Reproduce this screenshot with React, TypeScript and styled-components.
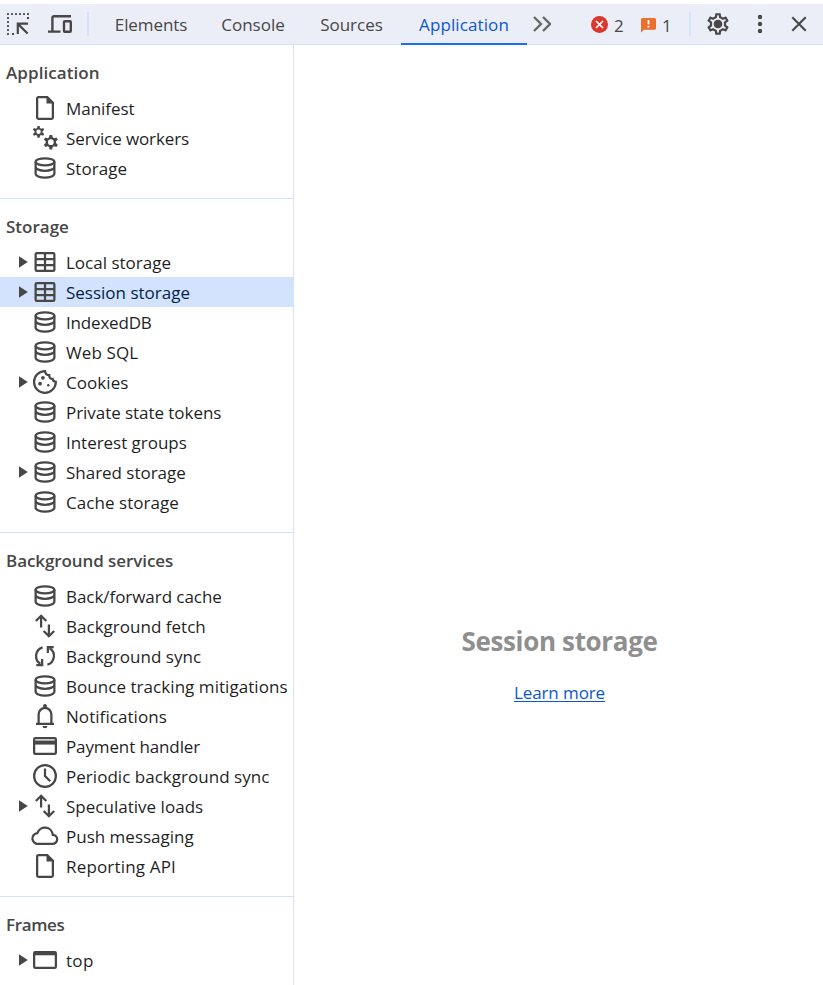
import styled, { createGlobalStyle } from "styled-components";
import { MdOutlineSettings } from "react-icons/md";
import type { ReactNode } from "react";


const GlobalStyle = createGlobalStyle`
    * {
        box-sizing:border-box;
    }
    body {
        margin:0;
        background-color:#fff;
        font-family:"Segoe UI", "Open Sans", "Noto Sans", sans-serif;
        font-size:17px;
        color:#1f1f1f;
    }
    svg {
        display:block;
        flex-shrink:0;
    }
`;
const Container = styled.div`
    width:100%;
    height:985px;
    padding-top:4px;
    display:flex;
    flex-direction:column;
    overflow:hidden;
`;
const Toolbar = styled.div`
    height:41px;
    display:flex;
    align-items:center;
    flex-shrink:0;
    background-color:#ebeef6;
    border-bottom:1px solid #d3e3fd;
    color:#474747;
`;
const IconButton = styled.div<{ $width: number }>`
    width:${(props) => props.$width}px;
    display:flex;
    justify-content:center;
    flex-shrink:0;
`;
const Divider = styled.div`
    width:2px;
    height:24px;
    flex-shrink:0;
    background-color:#d3e3fd;
`;
const Tabs = styled.div`
    display:flex;
    height:41px;
    margin-left:9px;
    align-self:flex-start;
`;
const Tab = styled.div<{ $width: number; $spacing: number; $active?: boolean }>`
    width:${(props) => props.$width}px;
    height:41px;
    line-height:41px;
    text-align:center;
    white-space:nowrap;
    letter-spacing:${(props) => props.$spacing}px;
    color:${(props) => (props.$active ? "#0b57d0" : "#474747")};
    box-shadow:${(props) => (props.$active ? "inset 0 -2px 0 #1a6ef3" : "none")};
`;
const Counters = styled.div`
    display:flex;
    margin-left:34px;
`;
const Counter = styled.div<{ $width: number }>`
    width:${(props) => props.$width}px;
    display:flex;
    align-items:center;
    flex-shrink:0;
    gap:6px;
    span {
        line-height:24px;
        padding-top:3px;
    }
`;
const Body = styled.div`
    flex:1;
    min-height:0;
    display:flex;
`;
const Sidebar = styled.div`
    width:294px;
    flex-shrink:0;
    border-right:1px solid #d3e3fd;
`;
const Section = styled.div`
    padding-bottom:15px;
    border-bottom:1px solid #d3e3fd;
    &:last-child {
        border-bottom:none;
    }
`;
const SectionTitle = styled.h2<{ $spacing: number }>`
    height:48px;
    margin:0;
    padding:8px 0 0 6px;
    line-height:40px;
    font-size:17px;
    font-weight:600;
    letter-spacing:${(props) => props.$spacing}px;
    color:#474747;
`;
const Row = styled.div<{ $selected?: boolean }>`
    height:30px;
    padding-left:18px;
    display:flex;
    align-items:center;
    color:${(props) => (props.$selected ? "#041e49" : "#1f1f1f")};
    background-color:${(props) => (props.$selected ? "#d3e3fd" : "transparent")};
`;
const Arrow = styled.div`
    width:12px;
    flex-shrink:0;
    color:#474747;
`;
const RowIcon = styled.div`
    width:30px;
    margin-right:6px;
    flex-shrink:0;
    color:#474747;
`;
const Label = styled.span<{ $spacing: number }>`
    padding-top:2px;
    line-height:28px;
    white-space:nowrap;
    letter-spacing:${(props) => props.$spacing}px;
`;
const Main = styled.div`
    flex:1;
    padding:576px 0 0 2px;
    display:flex;
    flex-direction:column;
    align-items:center;
    h1 {
        margin:0;
        line-height:40px;
        font-size:26px;
        font-weight:700;
        letter-spacing:-0.35px;
        color:#8f8f8f;
    }
    a {
        margin-top:17px;
        line-height:30px;
        letter-spacing:-0.1px;
        color:#0b57d0;
        text-decoration:underline;
        text-underline-offset:2px;
        text-decoration-thickness:1px;
    }
`;

const Svg = ({ children }: { children: ReactNode }) => (
    <svg width="30" height="30" viewBox="0 0 20 20" fill="none" stroke="currentColor" strokeWidth="1.5">
        {children}
    </svg>
);

// filled six-tooth cog with a round hole, drawn with the evenodd rule
const cogPath = (cx: number, cy: number, outer: number, inner: number, hole: number) => {
    const step = Math.PI / 3;
    const points: string[] = [];
    for (let i = 0; i < 6; i++) {
        const mid = i * step - Math.PI / 2;
        [[-0.34, inner], [-0.17, outer], [0.17, outer], [0.34, inner]].forEach(([offset, r]) => {
            const angle = mid + offset * step;
            points.push(`${(cx + Math.cos(angle) * r).toFixed(2)} ${(cy + Math.sin(angle) * r).toFixed(2)}`);
        });
    }
    return `M${points.join("L")}ZM${cx - hole} ${cy}a${hole} ${hole} 0 1 0 ${hole * 2} 0a${hole} ${hole} 0 1 0 ${-hole * 2} 0Z`;
};

const icons = {
    document: (
        <Svg>
            <path d="M11.5 2.75H5.6a.85.85 0 0 0-.85.85v12.8c0 .47.38.85.85.85h8.8c.47 0 .85-.38.85-.85V6.5z" />
            <path d="M11 2.5V7h4.5z" fill="currentColor" stroke="none" />
        </Svg>
    ),
    gears: (
        <Svg>
            <g fill="currentColor" fillRule="evenodd" stroke="none">
                <path d={cogPath(5.7, 5.9, 4, 2.7, 1.5)} />
                <path d={cogPath(13.9, 12.8, 4.9, 3.5, 1.9)} />
            </g>
        </Svg>
    ),
    database: (
        <Svg>
            <ellipse cx="10" cy="5.9" rx="6.25" ry="2.4" />
            <path d="M3.75 5.9v8c0 1.3 2.8 2.5 6.25 2.5s6.25-1.2 6.25-2.5v-8M3.75 9.2c0 1.4 2.8 2.7 6.25 2.7s6.25-1.3 6.25-2.7" />
        </Svg>
    ),
    table: (
        <Svg>
            <rect x="3.75" y="4.05" width="12.5" height="11.9" rx=".8" />
            <path d="M3.75 8h12.5M3.75 12h12.5M10 4v12" />
        </Svg>
    ),
    cookie: (
        <Svg>
            <path d="M10 2.75a7.25 7.25 0 1 0 7.2 7.1c-1.2-.1-2-.7-2.1-1.9-1.5 0-2.4-1-2.3-2.5-1.5 0-2.6-1.2-2.8-2.7z" />
            <circle cx="8.6" cy="7.2" r="1.25" fill="currentColor" stroke="none" />
            <circle cx="6.7" cy="11.1" r="1.25" fill="currentColor" stroke="none" />
            <circle cx="12.2" cy="12.2" r=".8" fill="currentColor" stroke="none" />
        </Svg>
    ),
    transfer: (
        <Svg>
            <path d="M7.4 11V3.4M3.9 6.7l3.5-3.5 3.5 3.5M12.6 9v7.6M9.1 13.3l3.5 3.5 3.5-3.5" />
        </Svg>
    ),
    sync: (
        <Svg>
            <path d="M8.4 4.2A6.1 6.1 0 0 0 6.9 15.2M4.2 16h3.9v-4" />
            <path d="M11.6 15.8A6.1 6.1 0 0 0 13.1 4.8M15.8 4h-3.9v4" />
        </Svg>
    ),
    bell: (
        <Svg>
            <path d="M4 15.25h12M5.75 15V8.9a4.25 4.25 0 0 1 8.5 0V15" />
            <path d="M8.4 16.6h3.2a1.6 1.6 0 0 1-3.2 0z" fill="currentColor" stroke="none" />
            <circle cx="10" cy="3.3" r="1.3" fill="currentColor" stroke="none" />
        </Svg>
    ),
    card: (
        <Svg>
            <rect x="2.75" y="4.75" width="14.5" height="10.5" rx=".8" />
            <path d="M3 7.7h14" strokeWidth="2.7" />
        </Svg>
    ),
    clock: (
        <Svg>
            <circle cx="10" cy="10" r="7.25" />
            <path d="M10 5v5l3.5 3.5" />
        </Svg>
    ),
    cloud: (
        <Svg>
            <path d="M5.5 15.25a3.6 3.6 0 0 1-.6-7.2 5.3 5.3 0 0 1 10.3 1.2 3 3 0 0 1-.2 6z" />
        </Svg>
    ),
    frame: (
        <Svg>
            <rect x="2.75" y="4.75" width="14.5" height="10.5" rx=".8" />
            <path d="M3 5.6h14" strokeWidth="2.5" />
        </Svg>
    ),
};

type Item = { label: string; icon: keyof typeof icons; spacing: number; expandable?: boolean; selected?: boolean };

const sections: { title: string; spacing: number; items: Item[] }[] = [
    {
        title: "Application",
        spacing: 0.08,
        items: [
            { label: "Manifest", icon: "document", spacing: -0.04 },
            { label: "Service workers", icon: "gears", spacing: -0.1 },
            { label: "Storage", icon: "database", spacing: 0.04 },
        ],
    },
    {
        title: "Storage",
        spacing: 0,
        items: [
            { label: "Local storage", icon: "table", spacing: 0, expandable: true },
            { label: "Session storage", icon: "table", spacing: 0, expandable: true, selected: true },
            { label: "IndexedDB", icon: "database", spacing: -0.18 },
            { label: "Web SQL", icon: "database", spacing: 0.12 },
            { label: "Cookies", icon: "cookie", spacing: 0.05, expandable: true },
            { label: "Private state tokens", icon: "database", spacing: -0.05 },
            { label: "Interest groups", icon: "database", spacing: -0.03 },
            { label: "Shared storage", icon: "database", spacing: -0.02, expandable: true },
            { label: "Cache storage", icon: "database", spacing: 0.05 },
        ],
    },
    {
        title: "Background services",
        spacing: -0.08,
        items: [
            { label: "Back/forward cache", icon: "database", spacing: -0.05 },
            { label: "Background fetch", icon: "transfer", spacing: 0.02 },
            { label: "Background sync", icon: "sync", spacing: 0.02 },
            { label: "Bounce tracking mitigations", icon: "database", spacing: 0.05 },
            { label: "Notifications", icon: "bell", spacing: 0.06 },
            { label: "Payment handler", icon: "card", spacing: -0.12 },
            { label: "Periodic background sync", icon: "clock", spacing: 0.03 },
            { label: "Speculative loads", icon: "transfer", spacing: 0.02, expandable: true },
            { label: "Push messaging", icon: "cloud", spacing: 0 },
            { label: "Reporting API", icon: "document", spacing: 0.17 },
        ],
    },
    {
        title: "Frames",
        spacing: -0.35,
        items: [{ label: "top", icon: "frame", spacing: 0.3, expandable: true }],
    },
];

const topDots = [0, 4, 8, 12, 16, 20];
const leftDots = [4, 8, 12, 16, 20];

const App = () => {

    return (
        <>
            <GlobalStyle />
            <Container>
                <Toolbar>
                    <IconButton $width={36}>
                        <svg width="22" height="22" viewBox="0 0 22 22" fill="currentColor">
                            {topDots.map((x) => <rect key={x} x={x} y="0" width="2" height="2" rx=".4" />)}
                            {leftDots.map((y) => <rect key={y} x="0" y={y} width="2" height="2" rx=".4" />)}
                            <path d="M20 4h2v2h-2zM5 20h2v2H5z" />
                            <path d="M9.7 9.5H21v2.2h-7.6l8 8-1.6 1.6-7.9-7.9V21H9.7z" />
                        </svg>
                    </IconButton>
                    <IconButton $width={48}>
                        <svg width="24" height="18" viewBox="0 0 24 18" fill="none" stroke="currentColor" strokeWidth="2.4">
                            <path d="M23 1.2H6a1.6 1.6 0 0 0-1.6 1.6V16M0 16.6h12.5" />
                            <rect x="16" y="6.2" width="6.8" height="10.6" rx=".8" />
                        </svg>
                    </IconButton>
                    <Divider style={{ marginLeft: 3 }} />
                    <Tabs>
                        <Tab $width={106} $spacing={-0.1}>Elements</Tab>
                        <Tab $width={98} $spacing={0}>Console</Tab>
                        <Tab $width={99} $spacing={0}>Sources</Tab>
                        <Tab $width={126} $spacing={0.1} $active>Application</Tab>
                    </Tabs>
                    <IconButton $width={30}>
                        <svg width="18" height="16" viewBox="0 0 18 16" fill="none" stroke="#666" strokeWidth="2.3">
                            <path d="M1 1l7 7-7 7M10 1l7 7-7 7" />
                        </svg>
                    </IconButton>
                    <Counters>
                        <Counter $width={50}>
                            <svg width="17" height="17" viewBox="0 0 17 17">
                                <circle cx="8.5" cy="8.5" r="8.5" fill="#dc362e" />
                                <path d="M5 5l7 7M12 5l-7 7" stroke="#fff" strokeWidth="1.7" />
                            </svg>
                            <span>2</span>
                        </Counter>
                        <Counter $width={48}>
                            <svg width="15" height="17" viewBox="0 0 15 17">
                                <path d="M1.5 2h12A1.5 1.5 0 0 1 15 3.5v8.7a1.5 1.5 0 0 1-1.5 1.5H3l-3 2.8v-13A1.5 1.5 0 0 1 1.5 2z" fill="#ec6f2e" />
                                <path d="M7.5 4v4.3M7.5 9.8v1.8" stroke="#fff" strokeWidth="1.8" />
                            </svg>
                            <span>1</span>
                        </Counter>
                    </Counters>
                    <Divider />
                    <IconButton $width={54}>
                        <svg width="26" height="26" viewBox="0 0 24 24" fill="currentColor">
                            <MdOutlineSettings size={24} />
                            <circle cx="12" cy="12" r="3.4" />
                        </svg>
                    </IconButton>
                    <IconButton $width={30}>
                        <svg width="6" height="20" viewBox="0 0 6 20" fill="currentColor">
                            <circle cx="3" cy="3" r="2.2" />
                            <circle cx="3" cy="10" r="2.2" />
                            <circle cx="3" cy="17" r="2.2" />
                        </svg>
                    </IconButton>
                    <IconButton $width={48}>
                        <svg width="16" height="16" viewBox="0 0 16 16" fill="none" stroke="currentColor" strokeWidth="2.1">
                            <path d="M1.3 1.3l13.4 13.4M14.7 1.3L1.3 14.7" />
                        </svg>
                    </IconButton>
                </Toolbar>
                <Body>
                    <Sidebar>
                        {sections.map((section) => (
                            <Section key={section.title}>
                                <SectionTitle $spacing={section.spacing}>{section.title}</SectionTitle>
                                {section.items.map((item) => (
                                    <Row key={item.label} $selected={item.selected}>
                                        <Arrow>
                                            {item.expandable && (
                                                <svg width="12" height="12" viewBox="0 0 12 12" fill="currentColor">
                                                    <path d="M1 .2L9.8 6 1 11.8z" />
                                                </svg>
                                            )}
                                        </Arrow>
                                        <RowIcon>{icons[item.icon]}</RowIcon>
                                        <Label $spacing={item.spacing}>{item.label}</Label>
                                    </Row>
                                ))}
                            </Section>
                        ))}
                    </Sidebar>
                    <Main>
                        <h1>Session storage</h1>
                        <a>Learn more</a>
                    </Main>
                </Body>
            </Container>
        </>
    )
};

export default App;
